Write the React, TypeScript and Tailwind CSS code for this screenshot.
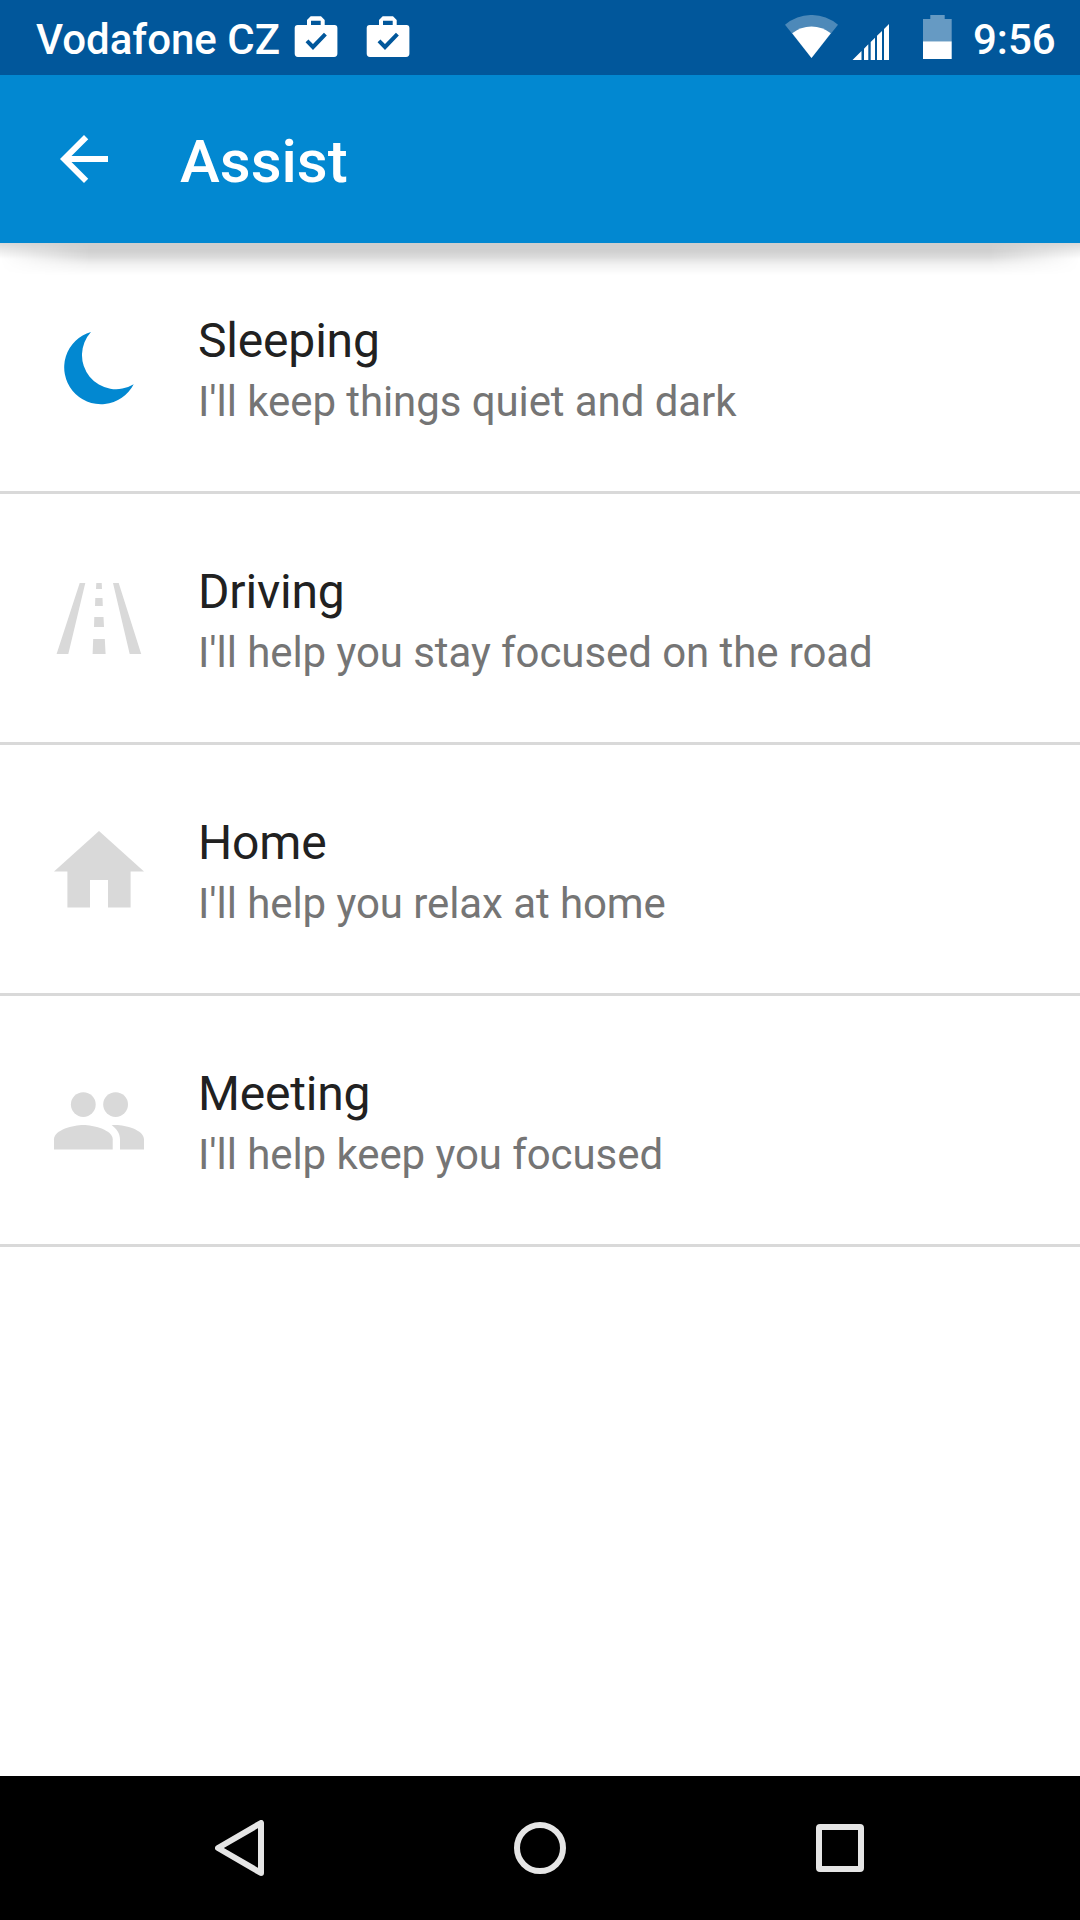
import type { ReactNode } from "react";

function ShopIcon() {
  return (
    <svg className="h-[42px] w-[44px]" viewBox="0 0 44 42">
      <path
        fill="#fff"
        fillRule="evenodd"
        d="M13 9V4L16.7 .3H27L30.7 4V9H40.3A3 3 0 0 1 43.4 12V37.5A3.5 3.5 0 0 1 40 41H4A3.5 3.5 0 0 1 .7 37.5V12A3 3 0 0 1 3.7 9ZM17 9H26.7V4.7H17Z"
      />
      <path d="M13 24.8L19 31L31.4 18.2" fill="none" stroke="#01579b" strokeWidth="4" />
    </svg>
  );
}

function WifiIcon() {
  return (
    <svg className="h-[44px] w-[54px]" viewBox="0 0 54 44">
      <path d="M0 9.7A41 41 0 0 1 53 9.7L26.5 43Z" fill="#fff" fillOpacity="0.3" />
      <path d="M7.2 18.3A31 31 0 0 1 45.8 18.3L26.5 43Z" fill="#fff" />
    </svg>
  );
}

function SignalIcon() {
  return (
    <svg className="h-[36px] w-[37px]" viewBox="0 0 37 36">
      <path
        fill="#fff"
        d="M.5 36L9.5 27V36ZM12 36V24.7L16.3 20.3V36ZM18.7 36V18L23 13.7V36ZM25 36V11.7L30 7V36ZM32 36V5L37 0V36Z"
      />
    </svg>
  );
}

function BatteryIcon() {
  return (
    <svg className="h-[44px] w-[29px]" viewBox="0 0 29 44">
      <path d="M0 26.3V4H7.3V0H21.7V4H28.7V26.3Z" fill="#fff" fillOpacity="0.4" />
      <path d="M0 26.3H28.7V44H0Z" fill="#fff" />
    </svg>
  );
}

function MoonIcon() {
  return <path fill="#0288d1" d="M46 17A36.8 36.8 0 1 0 88.7 69.3A34.1 34.1 0 0 1 46 17Z" />;
}

function RoadIcon() {
  return (
    <path
      fill="#d9d9d9"
      d="M34.7 17H40.3L23.3 88H11.6ZM68 17H73.7L96.2 88H84.7ZM51.3 17H56.7L57 23H51ZM50.3 32H57.5L57.8 40H50ZM49.3 51H58.5L59 61H49ZM48.2 73H59.8L60.6 88H47.6Z"
    />
  );
}

function HomeIcon() {
  return <path fill="#d9d9d9" d="M45 90.6V63H63V90.6H85.6V54.6H99L54 14L9 54.6H22.4V90.6Z" />;
}

function PeopleIcon() {
  return (
    <g fill="#d9d9d9">
      <circle cx="38.3" cy="36.6" r="12.4" />
      <circle cx="70.6" cy="36.6" r="12.4" />
      <path d="M38.3 57C28.5 57 9 61.9 9 71.3V81.4H67.7V71.3C67.7 61.9 48.1 57 38.3 57Z" />
      <path d="M70.7 57C69.5 57 68.1 57.1 66.6 57.2C71.4 60.6 75 65.2 75 71.3V81.4H99V71.3C99 61.9 80.4 57 70.7 57Z" />
    </g>
  );
}

const modes: { title: string; text: string; icon: ReactNode }[] = [
  { title: "Sleeping", text: "I'll keep things quiet and dark", icon: <MoonIcon /> },
  { title: "Driving", text: "I'll help you stay focused on the road", icon: <RoadIcon /> },
  { title: "Home", text: "I'll help you relax at home", icon: <HomeIcon /> },
  { title: "Meeting", text: "I'll help keep you focused", icon: <PeopleIcon /> },
];

export default function App() {
  return (
    <div className="flex h-[1920px] w-[1080px] flex-col overflow-hidden bg-white font-['Roboto',sans-serif]">
      <div className="flex h-[75px] shrink-0 items-start bg-[#01579b] text-[42px] leading-[49px] font-medium text-white">
        <span className="mt-[15px] ml-[36px] w-[258px] whitespace-nowrap">Vodafone CZ</span>
        <div className="mt-[16px] flex gap-[28px]">
          <ShopIcon />
          <ShopIcon />
        </div>
        <div className="mt-[15px] ml-auto">
          <WifiIcon />
        </div>
        <div className="mt-[24px] ml-[13px]">
          <SignalIcon />
        </div>
        <div className="mt-[15px] ml-[34px]">
          <BatteryIcon />
        </div>
        <span className="mt-[15px] ml-[21px] w-[107px] whitespace-nowrap">9:56</span>
      </div>

      <header className="relative z-10 flex h-[168px] shrink-0 items-start bg-[#0288d1] text-white">
        <svg className="mt-[48px] ml-[48px] size-[72px]" viewBox="0 0 24 24">
          <path fill="#fff" d="M20 11H7.83l5.59-5.59L12 4l-8 8 8 8 1.41-1.41L7.83 13H20v-2z" />
        </svg>
        <h1 className="mt-[52px] ml-[60px] text-[60px] leading-[70px] font-medium">Assist</h1>
        {/* Elevation shadow: a tight edge plus a deeper layer that fades out towards both sides */}
        <div className="absolute inset-x-0 top-full h-[16px] bg-[linear-gradient(to_bottom,rgba(0,0,0,0.15),rgba(0,0,0,0.07)_50%,transparent)]" />
        <div className="absolute inset-x-0 top-full h-[32px] bg-[linear-gradient(to_bottom,rgba(0,0,0,0.05),rgba(0,0,0,0.12)_8px,rgba(0,0,0,0.12)_15px,rgba(0,0,0,0.05)_22px,transparent)] [mask-image:linear-gradient(to_right,transparent,black_90px,black_990px,transparent)]" />
      </header>

      <main className="flex-1">
        {modes.map((mode) => (
          <div key={mode.title} className="flex h-[251px] items-start border-b-3 border-[#d9d9d9]">
            <svg className="mt-[72px] ml-[45px] size-[108px]" viewBox="0 0 108 108">
              {mode.icon}
            </svg>
            <div className="mt-[69px] ml-[45px] whitespace-nowrap">
              <div className="text-[48px] leading-[57px] tracking-[-0.18px] text-[#212121]">{mode.title}</div>
              <div className="mt-[8px] text-[42px] leading-[49px] tracking-[-0.08px] text-[#757575]">{mode.text}</div>
            </div>
          </div>
        ))}
      </main>

      <nav className="flex h-[144px] shrink-0 items-center justify-center bg-black">
        <div className="flex w-[300px] justify-center">
          <svg className="h-[56px] w-[50px]" viewBox="0 0 50 56">
            <path
              d="M46 3L46 53L3 28Z"
              fill="none"
              stroke="#e5e5e5"
              strokeWidth="6"
              strokeLinejoin="round"
            />
          </svg>
        </div>
        <div className="flex w-[300px] justify-center">
          <div className="size-[52px] rounded-full border-6 border-[#e5e5e5]" />
        </div>
        <div className="flex w-[300px] justify-center">
          <div className="size-[48px] rounded-[4px] border-6 border-[#e5e5e5]" />
        </div>
      </nav>
    </div>
  );
}
